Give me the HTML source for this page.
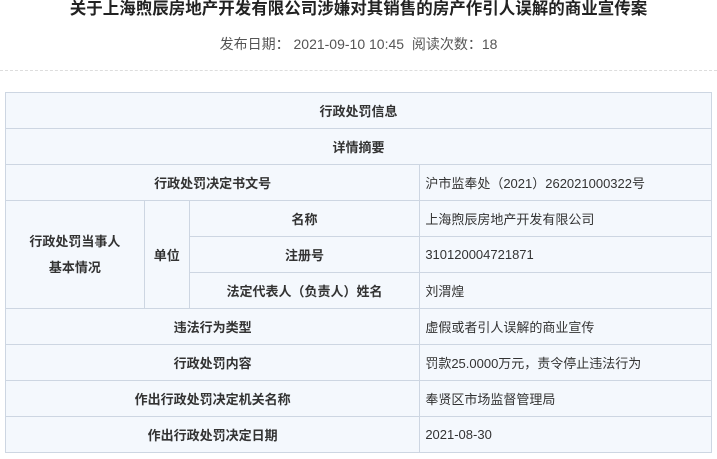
<!DOCTYPE html>
<html><head><meta charset="utf-8"><style>
*{margin:0;padding:0;box-sizing:border-box}
body{width:717px;height:459px;background:#fff;overflow:hidden;position:relative;font-family:"Liberation Sans","Noto Sans CJK SC","WenQuanYi Zen Hei",sans-serif;color:#333}
.title{position:absolute;top:-5px;left:0;width:717px;text-align:center;font-size:16.5px;font-weight:bold;color:#222;white-space:nowrap}
.date{position:absolute;top:34px;left:0;width:717px;text-align:center;font-size:14px;color:#555;white-space:nowrap}
.dash{position:absolute;top:70px;left:0;width:717px;border-top:1px dashed #ddd}
table{position:absolute;top:92px;left:5px;width:707px;border-collapse:collapse;background:#f4f8fd;font-size:13px}
td{border:1px solid #cdd6e2;height:36px;text-align:center;color:#333}
td.b{font-weight:bold}
td.v{text-align:left;padding-left:5px;font-size:13px}
</style></head><body>
<div class="title">关于上海煦辰房地产开发有限公司涉嫌对其销售的房产作引人误解的商业宣传案</div>
<div class="date">发布日期： 2021-09-10 10:45 &nbsp;阅读次数：18</div>
<div class="dash"></div>
<table>
<colgroup><col style="width:139px"><col style="width:45px"><col style="width:231px"><col style="width:292px"></colgroup>
<tr><td class="b" colspan="4">行政处罚信息</td></tr>
<tr><td class="b" colspan="4">详情摘要</td></tr>
<tr><td class="b" colspan="3">行政处罚决定书文号</td><td class="v">沪市监奉处（2021）262021000322号</td></tr>
<tr><td class="b" rowspan="3" style="line-height:26px">行政处罚当事人<br>基本情况</td><td class="b" rowspan="3">单位</td><td class="b">名称</td><td class="v">上海煦辰房地产开发有限公司</td></tr>
<tr><td class="b">注册号</td><td class="v">310120004721871</td></tr>
<tr><td class="b">法定代表人（负责人）姓名</td><td class="v">刘渭煌</td></tr>
<tr><td class="b" colspan="3">违法行为类型</td><td class="v">虚假或者引人误解的商业宣传</td></tr>
<tr><td class="b" colspan="3">行政处罚内容</td><td class="v">罚款25.0000万元，责令停止违法行为</td></tr>
<tr><td class="b" colspan="3">作出行政处罚决定机关名称</td><td class="v">奉贤区市场监督管理局</td></tr>
<tr><td class="b" colspan="3">作出行政处罚决定日期</td><td class="v">2021-08-30</td></tr>
</table>
</body></html>
